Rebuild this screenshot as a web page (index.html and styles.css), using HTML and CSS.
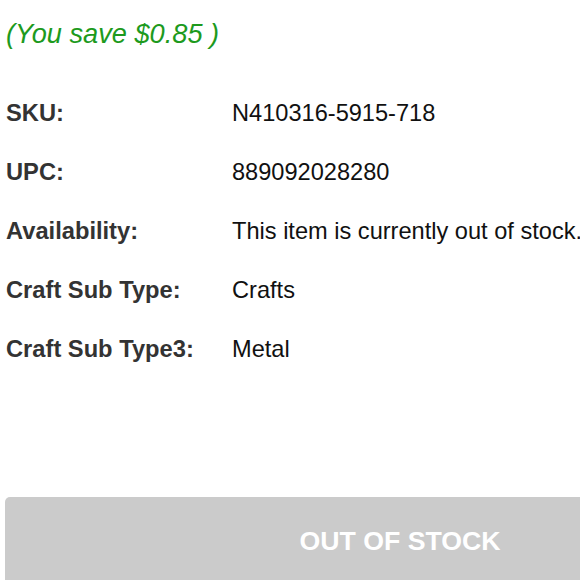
FILE: index.html
```html
<!DOCTYPE html>
<html>
<head>
<meta charset="utf-8">
<link rel="stylesheet" href="styles.css">
</head>
<body>
<div class="page">
  <p class="save">(You save $0.85 )</p>
  <div class="specs">
    <div class="row"><span class="label">SKU:</span><span class="value">N410316-5915-718</span></div>
    <div class="row"><span class="label">UPC:</span><span class="value">889092028280</span></div>
    <div class="row"><span class="label">Availability:</span><span class="value">This item is currently out of stock.</span></div>
    <div class="row"><span class="label">Craft Sub Type:</span><span class="value">Crafts</span></div>
    <div class="row"><span class="label">Craft Sub Type3:</span><span class="value">Metal</span></div>
  </div>
  <button class="oos">OUT OF STOCK</button>
</div>
</body>
</html>
```
FILE: styles.css
```css
html, body {
  margin: 0;
  padding: 0;
  background: #fff;
  overflow: hidden;
}
.page {
  width: 580px;
  height: 580px;
  overflow: hidden;
  font-family: "Liberation Sans", Arial, sans-serif;
  padding: 0 0 0 6px;
  box-sizing: border-box;
}
.save {
  margin: 0;
  padding-top: 18px;
  font-size: 27.2px;
  line-height: 32px;
  font-style: italic;
  color: #1d9a1d;
  white-space: nowrap;
}
.specs {
  display: flex;
  flex-direction: column;
  margin-top: 50px;
  gap: 32px;
}
.row {
  display: flex;
  font-size: 23.7px;
  line-height: 27px;
  white-space: nowrap;
}
.label {
  width: 226px;
  flex: none;
  font-weight: bold;
  color: #333;
}
.value {
  color: #111;
  font-size: 23.6px;
}
.oos {
  display: block;
  margin-top: 134px;
  margin-left: -1px;
  width: 790px;
  height: 90px;
  border: none;
  border-radius: 5px;
  background: #cbcbcb;
  color: #fff;
  font-family: "Liberation Sans", Arial, sans-serif;
  font-weight: bold;
  font-size: 26.7px;
  padding: 0 0 2px 0;
  text-align: center;
}
```
